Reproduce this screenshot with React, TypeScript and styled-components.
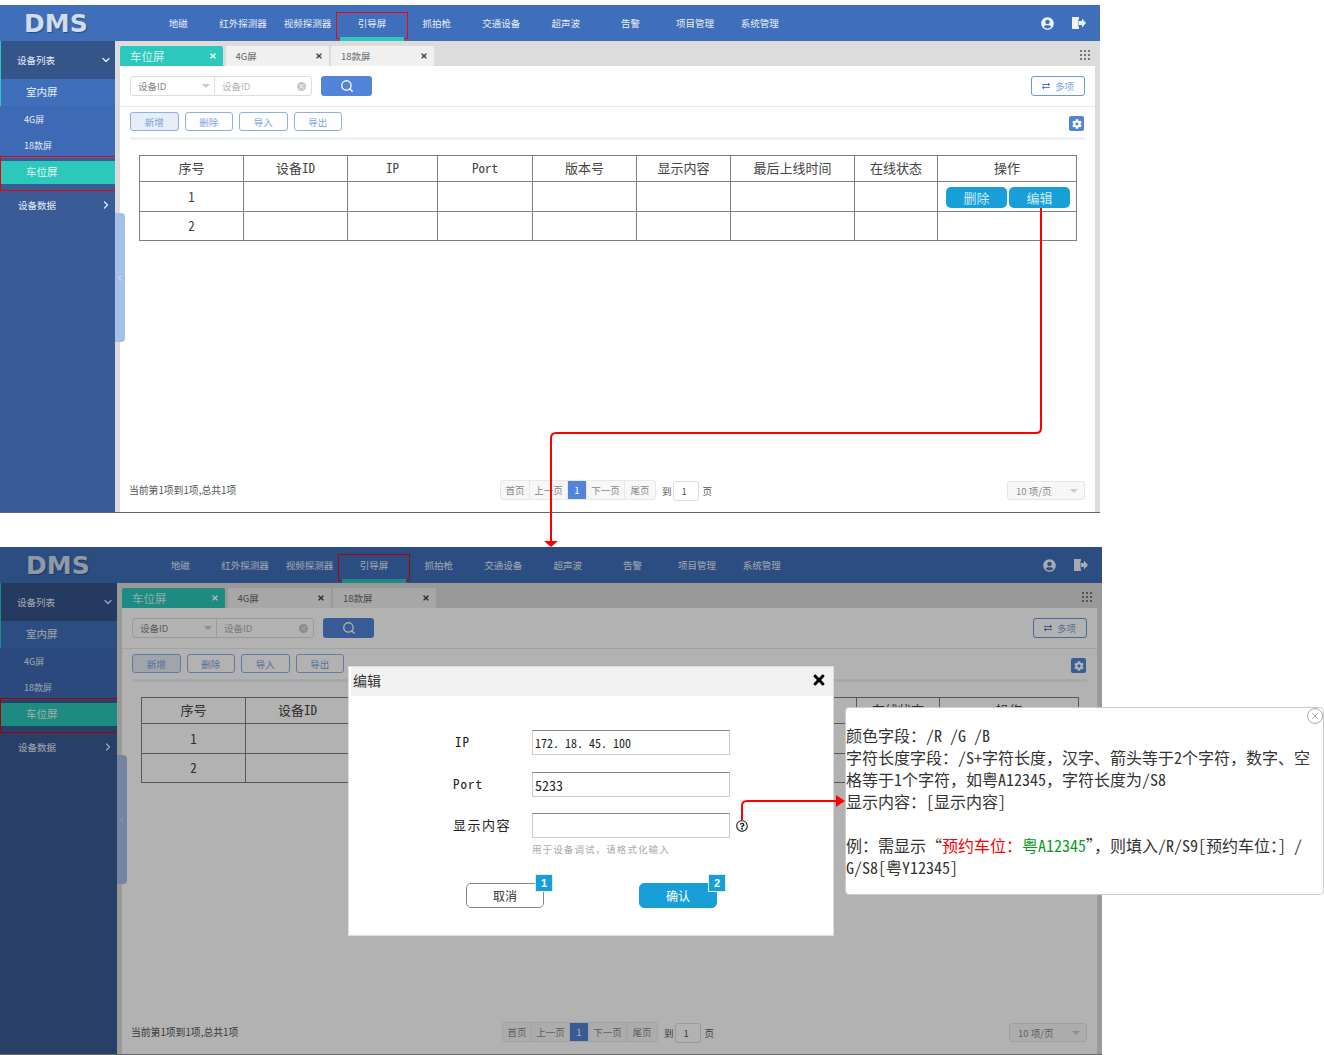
import React from "react";
import styled, { createGlobalStyle } from "styled-components";
import { ChevronDown, ChevronLeft, ChevronRight, Search, X } from "lucide-react";
import { FaCog, FaExchangeAlt, FaRegQuestionCircle, FaTimes, FaUserCircle } from "react-icons/fa";

const UI_FONT = `"Noto Sans CJK SC", "Liberation Sans", sans-serif`;
const MONO_FONT = `"Noto Sans Mono CJK SC", "Liberation Mono", "Noto Sans CJK SC", monospace`;

const GlobalStyle = createGlobalStyle`
  html, body {
    margin: 0;
    background: #fff;
    font-family: ${UI_FONT};
  }
  * { box-sizing: border-box; }
`;

const Sheet = styled.div`
  position: relative;
  width: 1324px;
  height: 1055px;
  padding-top: 5px;
  overflow: hidden;
`;

const Screen = styled.div<{ $width: number }>`
  position: relative;
  width: ${(p) => p.$width}px;
  height: 508px;
  margin-bottom: 34px;
  display: flex;
  flex-direction: column;
  border-bottom: 1px solid #666;
`;

const Dim = styled.div`
  position: absolute;
  inset: 0;
  background: rgba(0, 0, 0, 0.3);
`;

const Header = styled.header<{ $side: number }>`
  height: 36px;
  flex: none;
  display: flex;
  align-items: center;
  background: #3f6fbb;
  padding-left: ${(p) => p.$side - 91}px;
  padding-right: 14px;
`;

const Logo = styled.div`
  width: 122px;
  font: bold 25px/1 "DejaVu Sans", sans-serif;
  color: #cfdcee;
  text-shadow: 1px 1px 1px rgba(20, 40, 80, 0.5);
`;

const Nav = styled.nav`
  display: flex;
  height: 100%;
`;

const NavItem = styled.div<{ $active?: boolean }>`
  position: relative;
  width: 64.6px;
  height: 100%;
  display: flex;
  align-items: center;
  justify-content: center;
  padding-bottom: 1px;
  font-size: 9.5px;
  white-space: nowrap;
  color: #e8eef8;

  ${(p) =>
    p.$active &&
    `
    &::before {
      content: "";
      position: absolute;
      left: -4px;
      right: -4px;
      top: 7px;
      height: 25px;
      border: 1.5px solid #f00;
    }
    &::after {
      content: "";
      position: absolute;
      left: 0;
      right: 0;
      bottom: 0;
      height: 4px;
      background: #2cc8bb;
    }
  `}
`;

const HeaderIcons = styled.div`
  margin-left: auto;
  display: flex;
  align-items: center;
  gap: 18px;
  color: #f0f4fa;
`;

const Body = styled.div`
  flex: 1;
  display: flex;
  min-height: 0;
`;

const Sidebar = styled.aside<{ $side: number }>`
  width: ${(p) => p.$side}px;
  flex: none;
  background: #3a5c96;
  color: #e6edf7;
`;

const GroupRow = styled.div<{ $open?: boolean }>`
  height: ${(p) => (p.$open ? 38 : 36)}px;
  display: flex;
  align-items: center;
  justify-content: space-between;
  padding: 0 3px 0 ${(p) => (p.$open ? 16 : 18)}px;
  font-size: 9.5px;
  background: ${(p) => (p.$open ? "#34548a" : "transparent")};
  border-left: ${(p) => (p.$open ? "1px solid #2cc8bb" : "0")};
`;

const SubList = styled.div`
  background: #3e69b4;
`;

const SubItem = styled.div<{ $big?: boolean; $first?: boolean }>`
  height: ${(p) => (p.$big ? 27 : 26)}px;
  display: flex;
  align-items: center;
  padding-left: ${(p) => (p.$big ? 25 : 24)}px;
  padding-bottom: ${(p) => (p.$big ? 2 : 0)}px;
  font-size: ${(p) => (p.$big ? 10.5 : 9)}px;
  background: ${(p) => (p.$first ? "#3f6fbb" : "transparent")};
  border-left: ${(p) => (p.$first ? "1px solid #2cc8bb" : "0")};
`;

const ActiveSlot = styled.div`
  position: relative;
  height: 29px;
  padding-top: 3px;
  background: #3a5c96;

  &::after {
    content: "";
    position: absolute;
    left: 0;
    right: -1px;
    top: -2px;
    height: 33px;
    border: 1px solid #e00;
  }
`;

const ActiveItem = styled.div`
  height: 23px;
  margin-left: 1px;
  display: flex;
  align-items: center;
  padding: 0 0 2px 25px;
  font-size: 10.5px;
  color: #e8f8f6;
  background: #2cc8bb;
`;

const Main = styled.main`
  position: relative;
  flex: 1;
  min-width: 0;
  display: flex;
  flex-direction: column;
  background: #dcdcdc;
  padding: 0 5px;
`;

const Handle = styled.div`
  position: absolute;
  left: 0;
  top: 172px;
  width: 10px;
  height: 129px;
  display: flex;
  align-items: center;
  justify-content: center;
  background: #a6bfe8;
  border-radius: 0 4px 4px 0;
  color: #f2f6fc;
`;

const TabBar = styled.div`
  height: 25px;
  flex: none;
  display: flex;
  align-items: flex-end;
  gap: 2.5px;
`;

const Tab = styled.div<{ $active?: boolean }>`
  width: 103px;
  height: 20px;
  display: flex;
  align-items: center;
  justify-content: space-between;
  padding: 0 6px 0 10px;
  font-size: ${(p) => (p.$active ? 11.5 : 9.5)}px;
  color: ${(p) => (p.$active ? "#d8f6f3" : "#666")};
  background: ${(p) => (p.$active ? "#2cc8bb" : "#f0f0f0")};
  border-radius: 2px 2px 0 0;

  svg {
    color: ${(p) => (p.$active ? "#fff" : "#444")};
  }
`;

const TabMenu = styled.svg`
  margin-left: auto;
  margin-bottom: 5px;
  margin-right: 4px;
`;

const Panel = styled.section`
  flex: 1;
  min-height: 0;
  display: flex;
  flex-direction: column;
  background: #fff;
`;

const SearchRow = styled.div`
  height: 41px;
  flex: none;
  display: flex;
  align-items: center;
  padding: 0 10px;
  border-bottom: 1px solid #e8e8e8;
`;

const SearchBox = styled.div`
  width: 182px;
  height: 20px;
  display: flex;
  align-items: center;
  border: 1px solid #ddd;
  border-radius: 3px;
  font-size: 9.5px;
  color: #999;
`;

const SearchSelect = styled.div`
  width: 84px;
  height: 100%;
  display: flex;
  align-items: center;
  justify-content: space-between;
  padding: 0 4px 0 7px;
  border-right: 1px solid #ddd;
  color: #888;
`;

const Caret = styled.span`
  width: 0;
  height: 0;
  border: 4px solid transparent;
  border-top: 4px solid #c4ccd8;
  border-bottom: 0;
`;

const SearchInput = styled.div`
  flex: 1;
  display: flex;
  align-items: center;
  justify-content: space-between;
  padding: 0 5px 0 7px;
  color: #b5b5b5;
`;

const ClearDot = styled.span`
  width: 9px;
  height: 9px;
  display: flex;
  align-items: center;
  justify-content: center;
  border-radius: 50%;
  background: #c4c8ce;
  color: #fff;
`;

const SearchButton = styled.button`
  width: 51px;
  height: 20px;
  margin-left: 9px;
  padding: 0 0 1px;
  display: flex;
  align-items: center;
  justify-content: center;
  background: #5285d8;
  border: 0;
  border-radius: 3px;
  color: #fff;
`;

const MoreButton = styled.button`
  width: 54px;
  height: 20px;
  margin-left: auto;
  padding: 0;
  display: flex;
  align-items: center;
  justify-content: center;
  gap: 5px;
  font-family: ${UI_FONT};
  font-size: 9.5px;
  color: #7ea3e0;
  background: #fff;
  border: 1px solid #6d97dc;
  border-radius: 3px;

  svg {
    color: #5b7fb8;
  }
`;

const ActionRow = styled.div`
  height: 30px;
  flex: none;
  display: flex;
  align-items: flex-start;
  padding: 5px 10px 0;
  gap: 6px;
`;

const ActionButton = styled.button<{ $active?: boolean }>`
  width: 48.5px;
  height: 19px;
  padding: 0;
  font-family: ${UI_FONT};
  font-size: 9.5px;
  color: #7ea3e0;
  background: ${(p) => (p.$active ? "#e6edf7" : "#fff")};
  border: 1px solid #8fb0e6;
  border-radius: 3px;
`;

const GearButton = styled.div`
  width: 15px;
  height: 15px;
  margin: 4px 1px 0 auto;
  display: flex;
  align-items: center;
  justify-content: center;
  background: #5285d8;
  border-radius: 2px;
  color: #fff;
`;

const Strip = styled.div`
  height: 3px;
  flex: none;
  margin: 0 10px;
  background: #eef1f5;
`;

const Grid = styled.table`
  width: 938px;
  margin: 15px 0 0 19px;
  flex: none;
  table-layout: fixed;
  border-collapse: collapse;
  font-family: ${MONO_FONT};
  font-size: 13px;
  color: #444;

  th, td {
    border: 1px solid #7f7f7f;
    padding: 0 0 2px;
    text-align: center;
    font-weight: normal;
  }
  th { height: 26px; }
  td { height: 30px; }
  tbody tr:first-child td { padding-bottom: 0; }
  tbody tr:last-child td { height: 29px; }
`;

const CellActions = styled.div`
  display: flex;
  justify-content: center;
  gap: 2px;
  padding: 1px 0 0 2px;
`;

const CellButton = styled.button`
  width: 61px;
  height: 21px;
  padding: 0;
  font-family: ${MONO_FONT};
  font-size: 13px;
  color: #cfeaf7;
  background: #189fd8;
  border: 0;
  border-radius: 5px;
`;

const Footer = styled.footer`
  margin-top: auto;
  height: 32px;
  flex: none;
  display: flex;
  align-items: flex-start;
  padding: 0 10px 0 9px;
  font-size: 9.5px;
  color: #555;
`;

const PageInfo = styled.div`
  width: 371px;
  font-size: 9.8px;
  line-height: 20px;
`;

const Pager = styled.div`
  display: flex;
  height: 20px;
  border: 1px solid #e8e8e8;
  border-radius: 3px;
  background: #f7f7f7;
  color: #888;
`;

const PageCell = styled.div<{ $width: number; $current?: boolean }>`
  width: ${(p) => p.$width}px;
  display: flex;
  align-items: center;
  justify-content: center;
  color: ${(p) => (p.$current ? "#fff" : "#888")};
  background: ${(p) => (p.$current ? "#5285d8" : "transparent")};
  border-right: 1px solid #e8e8e8;

  &:last-child { border-right: 0; }
`;

const GoTo = styled.div`
  display: flex;
  align-items: center;
  gap: 1px;
  height: 20px;
  margin: 1px 0 0 6px;
`;

const GoInput = styled.div`
  width: 26px;
  height: 20px;
  margin-right: 3px;
  padding-left: 8px;
  line-height: 19px;
  border: 1px solid #ddd;
  border-radius: 3px;
  background: #fff;
`;

const SizeSelect = styled.div`
  width: 78px;
  height: 19px;
  margin: 1px 0 0 auto;
  display: flex;
  align-items: center;
  justify-content: space-between;
  padding: 0 6px 0 8px;
  border: 1px solid #e5e5e5;
  border-radius: 3px;
  background: #f7f7f7;
  color: #888;
`;

const Modal = styled.div`
  position: absolute;
  left: 348px;
  top: 666px;
  width: 486px;
  height: 270px;
  background: #fff;
  border: 1px solid #ddd;
`;

const ModalTitle = styled.div`
  height: 29px;
  margin-left: 2px;
  display: flex;
  align-items: center;
  justify-content: space-between;
  padding: 0 6px 3px 2px;
  background: #f1f1f1;
  font-family: ${MONO_FONT};
  font-size: 14px;
  color: #333;
`;

const Form = styled.div`
  display: grid;
  grid-template-columns: 79px 198px 24px;
  grid-template-rows: 42px 41px 25px;
  padding: 34px 0 0 104px;
`;

const FieldLabel = styled.div<{ $inset?: boolean; $wide?: boolean }>`
  padding-left: ${(p) => (p.$inset ? 2 : 0)}px;
  font-family: ${MONO_FONT};
  font-size: 13px;
  line-height: 24px;
  letter-spacing: ${(p) => (p.$wide ? 1.5 : 1)}px;
  color: #222;
  white-space: nowrap;
`;

const FieldInput = styled.input<{ $size: number }>`
  width: 198px;
  height: 25px;
  padding: 0 2px;
  font-family: ${MONO_FONT};
  font-size: ${(p) => p.$size}px;
  color: #222;
  background: #fff;
  border: 1px solid #ccc;
  border-top: 1px solid #888;
  border-radius: 0;
  outline: none;
`;

const HelpIcon = styled.div`
  display: flex;
  justify-content: center;
  padding-top: 7px;
  color: #222;
`;

const Hint = styled.div`
  margin: 5px 0 0 183px;
  height: 13px;
  font-size: 9.5px;
  line-height: 13px;
  letter-spacing: 1.1px;
  white-space: nowrap;
  color: #aaa;
`;

const ModalActions = styled.div`
  display: flex;
  gap: 95px;
  padding: 27px 0 0 117px;
`;

const DialogButton = styled.button<{ $primary?: boolean }>`
  position: relative;
  width: 78px;
  height: 25px;
  padding: 0;
  font-family: ${UI_FONT};
  font-size: 12px;
  color: ${(p) => (p.$primary ? "#fff" : "#333")};
  background: ${(p) => (p.$primary ? "#189fd8" : "#fff")};
  border: 1px solid ${(p) => (p.$primary ? "#189fd8" : "#888")};
  border-radius: 5px;
`;

const Badge = styled.span`
  position: absolute;
  right: -10px;
  top: -10px;
  width: 18px;
  height: 18px;
  font: bold 11px/16px "Liberation Sans", sans-serif;
  text-align: center;
  color: #fff;
  background: #189fd8;
  border: 1px solid #d6eef9;
`;

const Tip = styled.div`
  position: absolute;
  left: 845px;
  top: 707px;
  width: 479px;
  height: 188px;
  padding: 16px 0 0;
  background: #fff;
  border: 1px solid #ccc;
  border-radius: 4px;
  font-family: ${MONO_FONT};
  font-size: 16px;
  line-height: 22px;
  color: #333;
`;

const TipLine = styled.div`
  height: 22px;
  white-space: pre;
`;

const TipClose = styled.svg`
  position: absolute;
  right: -1px;
  top: -1px;
`;

const Red = styled.span`
  color: #f00;
`;

const Green = styled.span`
  color: #0a9a1e;
`;

const Arrows = styled.svg`
  position: absolute;
  left: 0;
  top: 0;
  pointer-events: none;
`;

const menus = ["地磁", "红外探测器", "视频探测器", "引导屏", "抓拍枪", "交通设备", "超声波", "告警", "项目管理", "系统管理"];
const tabs = ["车位屏", "4G屏", "18款屏"];
const columns = [
  { title: "序号", width: 104 },
  { title: "设备ID", width: 104 },
  { title: "IP", width: 90 },
  { title: "Port", width: 95 },
  { title: "版本号", width: 104 },
  { title: "显示内容", width: 94 },
  { title: "最后上线时间", width: 124 },
  { title: "在线状态", width: 83 },
  { title: "操作", width: 139 },
];
const emptyCells = [1, 2, 3, 4, 5, 6, 7];
const pages = [
  { label: "首页", width: 29 },
  { label: "上一页", width: 38 },
  { label: "1", width: 19, current: true },
  { label: "下一页", width: 38 },
  { label: "尾页", width: 30 },
];

function LogoutIcon() {
  return (
    <svg width="14" height="12" viewBox="0 0 14 12" fill="currentColor">
      <path d="M0 0h7v2H3v8h4v2H0z" />
      <path d="M1.5 1h5v10h-5z" />
      <path d="M7 4h3V1.5L14 6l-4 4.5V8H7z" />
    </svg>
  );
}

function DotsIcon() {
  const dots = [0, 4, 8];
  return (
    <TabMenu width="11" height="11" viewBox="0 0 11 11" fill="#777">
      {dots.map((y) => dots.map((x) => <rect key={`${x}-${y}`} x={x} y={y} width="2" height="2" />))}
    </TabMenu>
  );
}

function DeviceScreen({ width, side, dimmed }: { width: number; side: number; dimmed?: boolean }) {
  return (
    <Screen $width={width}>
      <Header $side={side}>
        <Logo>DMS</Logo>
        <Nav>
          {menus.map((m) => (
            <NavItem key={m} $active={m === "引导屏"}>{m}</NavItem>
          ))}
        </Nav>
        <HeaderIcons>
          <FaUserCircle size={13} />
          <LogoutIcon />
        </HeaderIcons>
      </Header>
      <Body>
        <Sidebar $side={side}>
          <GroupRow $open>
            设备列表
            <ChevronDown size={12} strokeWidth={2.5} />
          </GroupRow>
          <SubList>
            <SubItem $big $first>室内屏</SubItem>
            <SubItem>4G屏</SubItem>
            <SubItem>18款屏</SubItem>
          </SubList>
          <ActiveSlot>
            <ActiveItem>车位屏</ActiveItem>
          </ActiveSlot>
          <GroupRow>
            设备数据
            <ChevronRight size={12} strokeWidth={2.5} />
          </GroupRow>
        </Sidebar>
        <Main>
          <Handle>
            <ChevronLeft size={14} strokeWidth={1.5} />
          </Handle>
          <TabBar>
            {tabs.map((t, i) => (
              <Tab key={t} $active={i === 0}>
                {t}
                <FaTimes size={8} />
              </Tab>
            ))}
            <DotsIcon />
          </TabBar>
          <Panel>
            <SearchRow>
              <SearchBox>
                <SearchSelect>
                  设备ID
                  <Caret />
                </SearchSelect>
                <SearchInput>
                  设备ID
                  <ClearDot>
                    <X size={7} strokeWidth={3} />
                  </ClearDot>
                </SearchInput>
              </SearchBox>
              <SearchButton>
                <Search size={14} strokeWidth={2.2} />
              </SearchButton>
              <MoreButton>
                <FaExchangeAlt size={8} />
                多项
              </MoreButton>
            </SearchRow>
            <ActionRow>
              <ActionButton $active>新增</ActionButton>
              <ActionButton>删除</ActionButton>
              <ActionButton>导入</ActionButton>
              <ActionButton>导出</ActionButton>
              <GearButton>
                <FaCog size={10} />
              </GearButton>
            </ActionRow>
            <Strip />
            <Grid>
              <colgroup>
                {columns.map((c) => (
                  <col key={c.title} width={c.width} />
                ))}
              </colgroup>
              <thead>
                <tr>
                  {columns.map((c) => (
                    <th key={c.title}>{c.title}</th>
                  ))}
                </tr>
              </thead>
              <tbody>
                <tr>
                  <td>1</td>
                  {emptyCells.map((c) => (
                    <td key={c} />
                  ))}
                  <td>
                    {!dimmed && (
                      <CellActions>
                        <CellButton>删除</CellButton>
                        <CellButton>编辑</CellButton>
                      </CellActions>
                    )}
                  </td>
                </tr>
                <tr>
                  <td>2</td>
                  {emptyCells.map((c) => (
                    <td key={c} />
                  ))}
                  <td />
                </tr>
              </tbody>
            </Grid>
            <Footer>
              <PageInfo>当前第1项到1项,总共1项</PageInfo>
              <Pager>
                {pages.map((p) => (
                  <PageCell key={p.label} $width={p.width} $current={p.current}>{p.label}</PageCell>
                ))}
              </Pager>
              <GoTo>
                到
                <GoInput>1</GoInput>
                页
              </GoTo>
              <SizeSelect>
                10 项/页
                <Caret />
              </SizeSelect>
            </Footer>
          </Panel>
        </Main>
      </Body>
      {dimmed && <Dim />}
    </Screen>
  );
}

export default function App() {
  return (
    <Sheet>
      <GlobalStyle />
      <DeviceScreen width={1100} side={115} />
      <DeviceScreen width={1102} side={117} dimmed />

      <Modal>
        <ModalTitle>
          编辑
          <FaTimes size={16} color="#000" />
        </ModalTitle>
        <Form>
          <FieldLabel $inset>IP</FieldLabel>
          <FieldInput $size={12} defaultValue="172. 18. 45. 100" readOnly />
          <span />
          <FieldLabel>Port</FieldLabel>
          <FieldInput $size={14} defaultValue="5233" readOnly />
          <span />
          <FieldLabel $wide>显示内容</FieldLabel>
          <FieldInput $size={14} defaultValue="" readOnly />
          <HelpIcon>
            <FaRegQuestionCircle size={12} />
          </HelpIcon>
        </Form>
        <Hint>用于设备调试，请格式化输入</Hint>
        <ModalActions>
          <DialogButton>
            取消
            <Badge>1</Badge>
          </DialogButton>
          <DialogButton $primary>
            确认
            <Badge>2</Badge>
          </DialogButton>
        </ModalActions>
      </Modal>

      <Tip>
        <TipClose width="18" height="18" viewBox="0 0 18 18" fill="none" stroke="#aaa">
          <circle cx="9" cy="9" r="7.5" />
          <path d="M6 6l6 6M12 6l-6 6" />
        </TipClose>
        <TipLine>颜色字段：/R /G /B</TipLine>
        <TipLine>字符长度字段：/S+字符长度，汉字、箭头等于2个字符，数字、空</TipLine>
        <TipLine>格等于1个字符，如粤A12345，字符长度为/S8</TipLine>
        <TipLine>显示内容：[显示内容]</TipLine>
        <TipLine> </TipLine>
        <TipLine>
          例：需显示“<Red>预约车位：</Red>
          <Green>粤A12345</Green>”，则填入/R/S9[预约车位：] /
        </TipLine>
        <TipLine>G/S8[粤Y12345]</TipLine>
      </Tip>

      <Arrows width="1324" height="1055" fill="none" stroke="#f00" strokeWidth="2">
        <path d="M1041 208V428Q1041 433 1036 433H556Q551 433 551 438V541" />
        <polygon points="544,541 558,541 551,547" fill="#f00" stroke="none" />
        <path d="M742 820V806Q742 801 747 801H836" />
        <polygon points="836,795 845,801 836,807" fill="#f00" stroke="none" />
      </Arrows>
    </Sheet>
  );
}
